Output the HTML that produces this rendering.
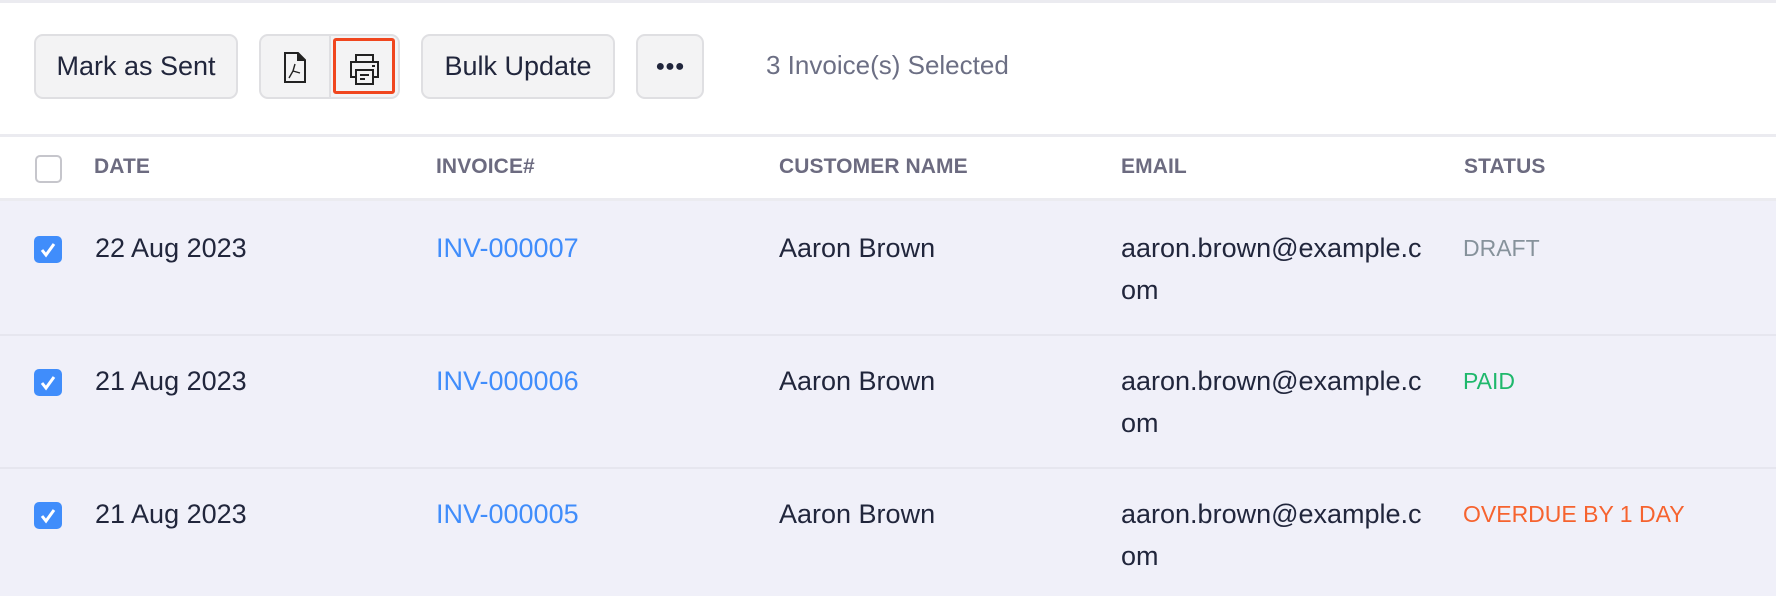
<!DOCTYPE html>
<html><head><meta charset="utf-8"><style>
*{margin:0;padding:0;box-sizing:border-box}
body{width:1776px;height:596px;overflow:hidden;background:#fff;font-family:"Liberation Sans",sans-serif;position:relative;color:#21263c}
.a{position:absolute}
.btn{position:absolute;top:34px;height:65px;background:#f3f3f4;border:2px solid #dfdfe2;border-radius:9px;font-size:27px;color:#21263c;display:flex;align-items:center;justify-content:center}
.hl{position:absolute;left:0;width:1776px;height:3px;background:#ebebf0}
.th{position:absolute;top:155px;font-size:21px;font-weight:bold;color:#6c6b80;letter-spacing:0.1px}
.row{position:absolute;left:0;width:1776px;background:#f0f0f9}
.td{position:absolute;font-size:27px;line-height:42px;color:#21263c}
.cb{position:absolute;left:34px;width:28px;height:27px;background:#408dfb;border-radius:5px}
.st{position:absolute;font-size:23px;line-height:42px}
</style></head><body>
<div class="hl" style="top:0"></div>
<div class="btn" style="left:34px;width:204px">Mark as Sent</div>
<div class="btn" style="left:259px;width:141px"></div>
<div class="a" style="left:329px;top:36px;width:2px;height:61px;background:#dfdfe2"></div>
<div class="a" style="left:333px;top:38px;width:62px;height:56px;border:3px solid #f0461e;border-radius:3px"></div>
<svg class="a" style="left:284px;top:52px" width="22" height="31" viewBox="0 0 22 31" fill="none" stroke="#222" stroke-width="2"><path d="M1 1H14L21 8V30H1Z"/><path d="M14 1V8H21" fill="#222"/><path d="M11 12L9 19L5 26M9 19L16 21M9 19" stroke-width="1.4"/></svg>
<svg class="a" style="left:349px;top:53px" width="31" height="32" viewBox="0 0 31 32" fill="none" stroke="#222" stroke-width="2"><path d="M7 9V2H24V9"/><path d="M7 24H2V9H29V24H24"/><rect x="7" y="17" width="17" height="14"/><path d="M11 22H20M11 26H16M23 13H26"/></svg>
<div class="btn" style="left:421px;width:194px">Bulk Update</div>
<div class="btn" style="left:636px;width:68px;font-size:16px;font-weight:bold;letter-spacing:0px">●●●</div>
<div class="a" style="left:766px;top:50px;font-size:26px;color:#6c6f84">3 Invoice(s) Selected</div>
<div class="hl" style="top:134px"></div>
<div class="a" style="left:35px;top:155px;width:27px;height:28px;border:2px solid #c6c6cc;border-radius:5px"></div>
<div class="th" style="left:94px">DATE</div>
<div class="th" style="left:436px">INVOICE#</div>
<div class="th" style="left:779px">CUSTOMER NAME</div>
<div class="th" style="left:1121px">EMAIL</div>
<div class="th" style="left:1464px">STATUS</div>
<div class="hl" style="top:198px"></div>

<div class="row" style="top:201px;height:133px"></div>
<div class="row" style="top:336px;height:131px"></div>
<div class="row" style="top:469px;height:127px"></div>
<div class="hl" style="top:334px;height:2px;background:#e6e6ef"></div>
<div class="hl" style="top:467px;height:2px;background:#e6e6ef"></div>

<div class="cb" style="top:236px"></div>
<div class="cb" style="top:369px"></div>
<div class="cb" style="top:502px"></div>
<svg class="a" style="left:34px;top:236px" width="28" height="27"><path d="M8 14L12 19L20 8" stroke="#fff" stroke-width="3" fill="none"/></svg>
<svg class="a" style="left:34px;top:369px" width="28" height="27"><path d="M8 14L12 19L20 8" stroke="#fff" stroke-width="3" fill="none"/></svg>
<svg class="a" style="left:34px;top:502px" width="28" height="27"><path d="M8 14L12 19L20 8" stroke="#fff" stroke-width="3" fill="none"/></svg>

<div class="td" style="left:95px;top:227px">22 Aug 2023</div>
<div class="td" style="left:436px;top:227px;color:#408dfb">INV-000007</div>
<div class="td" style="left:779px;top:227px">Aaron Brown</div>
<div class="td" style="left:1121px;top:227px">aaron.brown@example.c<br>om</div>
<div class="st" style="left:1463px;top:227px;color:#86929b">DRAFT</div>

<div class="td" style="left:95px;top:360px">21 Aug 2023</div>
<div class="td" style="left:436px;top:360px;color:#408dfb">INV-000006</div>
<div class="td" style="left:779px;top:360px">Aaron Brown</div>
<div class="td" style="left:1121px;top:360px">aaron.brown@example.c<br>om</div>
<div class="st" style="left:1463px;top:360px;color:#1fb86c">PAID</div>

<div class="td" style="left:95px;top:493px">21 Aug 2023</div>
<div class="td" style="left:436px;top:493px;color:#408dfb">INV-000005</div>
<div class="td" style="left:779px;top:493px">Aaron Brown</div>
<div class="td" style="left:1121px;top:493px">aaron.brown@example.c<br>om</div>
<div class="st" style="left:1463px;top:493px;color:#f6632f">OVERDUE BY 1 DAY</div>
</body></html>
